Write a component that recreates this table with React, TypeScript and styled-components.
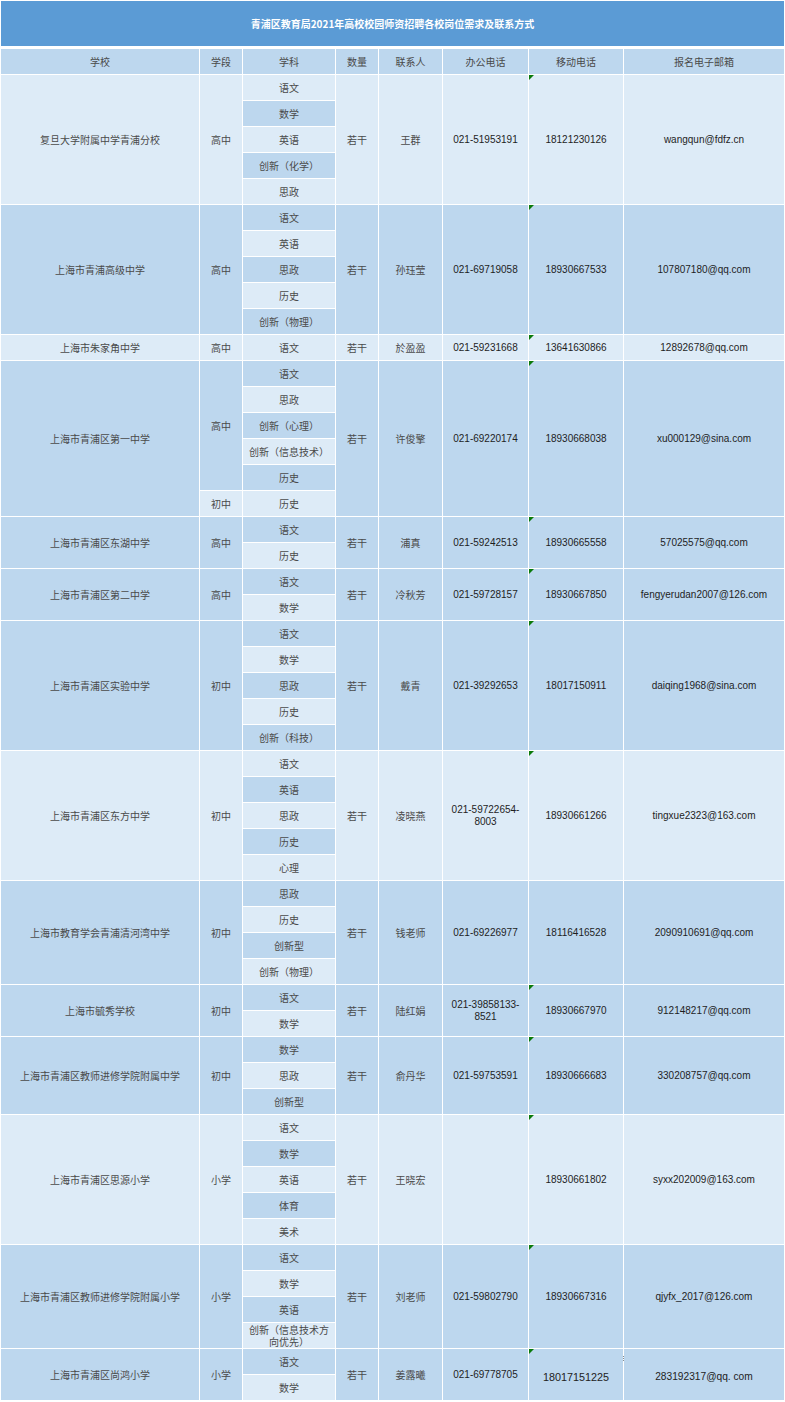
import styled, { createGlobalStyle, css } from "styled-components";

const GlobalStyle = createGlobalStyle`
  body {
    margin: 0;
    background: #ffffff;
    font-family: "Liberation Sans", "Noto Sans CJK SC", sans-serif;
  }
`;

type Tone = "light" | "dark";

interface Group {
  stage: string;
  subjects: string[];
}

interface School {
  name: string;
  groups: Group[];
  qty: string;
  contact: string;
  office: string;
  mobile: string;
  email: string;
  flagged: boolean;
  odd?: boolean;
}

const schools: School[] = [
  { name: "复旦大学附属中学青浦分校", groups: [{ stage: "高中", subjects: ["语文", "数学", "英语", "创新（化学）", "思政"] }], qty: "若干", contact: "王群", office: "021-51953191", mobile: "18121230126", email: "wangqun@fdfz.cn", flagged: true },
  { name: "上海市青浦高级中学", groups: [{ stage: "高中", subjects: ["语文", "英语", "思政", "历史", "创新（物理）"] }], qty: "若干", contact: "孙珏莹", office: "021-69719058", mobile: "18930667533", email: "107807180@qq.com", flagged: true },
  { name: "上海市朱家角中学", groups: [{ stage: "高中", subjects: ["语文"] }], qty: "若干", contact: "於盈盈", office: "021-59231668", mobile: "13641630866", email: "12892678@qq.com", flagged: true },
  { name: "上海市青浦区第一中学", groups: [{ stage: "高中", subjects: ["语文", "思政", "创新（心理）", "创新（信息技术）", "历史"] }, { stage: "初中", subjects: ["历史"] }], qty: "若干", contact: "许俊擎", office: "021-69220174", mobile: "18930668038", email: "xu000129@sina.com", flagged: true },
  { name: "上海市青浦区东湖中学", groups: [{ stage: "高中", subjects: ["语文", "历史"] }], qty: "若干", contact: "浦真", office: "021-59242513", mobile: "18930665558", email: "57025575@qq.com", flagged: true },
  { name: "上海市青浦区第二中学", groups: [{ stage: "高中", subjects: ["语文", "数学"] }], qty: "若干", contact: "冷秋芳", office: "021-59728157", mobile: "18930667850", email: "fengyerudan2007@126.com", flagged: true },
  { name: "上海市青浦区实验中学", groups: [{ stage: "初中", subjects: ["语文", "数学", "思政", "历史", "创新（科技）"] }], qty: "若干", contact: "戴青", office: "021-39292653", mobile: "18017150911", email: "daiqing1968@sina.com", flagged: true },
  { name: "上海市青浦区东方中学", groups: [{ stage: "初中", subjects: ["语文", "英语", "思政", "历史", "心理"] }], qty: "若干", contact: "凌晓燕", office: "021-59722654-8003", mobile: "18930661266", email: "tingxue2323@163.com", flagged: true },
  { name: "上海市教育学会青浦清河湾中学", groups: [{ stage: "初中", subjects: ["思政", "历史", "创新型", "创新（物理）"] }], qty: "若干", contact: "钱老师", office: "021-69226977", mobile: "18116416528", email: "2090910691@qq.com", flagged: false },
  { name: "上海市毓秀学校", groups: [{ stage: "初中", subjects: ["语文", "数学"] }], qty: "若干", contact: "陆红娟", office: "021-39858133-8521", mobile: "18930667970", email: "912148217@qq.com", flagged: true },
  { name: "上海市青浦区教师进修学院附属中学", groups: [{ stage: "初中", subjects: ["数学", "思政", "创新型"] }], qty: "若干", contact: "俞丹华", office: "021-59753591", mobile: "18930666683", email: "330208757@qq.com", flagged: true },
  { name: "上海市青浦区思源小学", groups: [{ stage: "小学", subjects: ["语文", "数学", "英语", "体育", "美术"] }], qty: "若干", contact: "王晓宏", office: "", mobile: "18930661802", email: "syxx202009@163.com", flagged: true },
  { name: "上海市青浦区教师进修学院附属小学", groups: [{ stage: "小学", subjects: ["语文", "数学", "英语", "创新（信息技术方向优先）"] }], qty: "若干", contact: "刘老师", office: "021-59802790", mobile: "18930667316", email: "qjyfx_2017@126.com", flagged: true },
  { name: "上海市青浦区尚鸿小学", groups: [{ stage: "小学", subjects: ["语文", "数学"] }], qty: "若干", contact: "姜露曦", office: "021-69778705", mobile: "18017151225", email: "283192317@qq. com", flagged: true, odd: true },
];

const headers = ["学校", "学段", "学科", "数量", "联系人", "办公电话", "移动电话", "报名电子邮箱"];
const widths = [198, 42, 92, 42, 63, 85, 94, 160];

const Page = styled.div`
  width: 785px;
`;

const Title = styled.div`
  margin: 1px 1px 2px;
  height: 45px;
  background: #5b9bd5;
  color: #ffffff;
  font-family: "Noto Sans CJK SC", sans-serif;
  font-weight: 700;
  font-size: 10px;
  display: flex;
  align-items: center;
  justify-content: center;
`;

const Table = styled.table`
  width: 785px;
  table-layout: fixed;
  border-collapse: separate;
  border-spacing: 1px;
  background: #ffffff;
`;

const Cell = styled.td<{ $tone: Tone; $latin?: boolean; $flag?: boolean; $big?: boolean; $mark?: boolean }>`
  position: relative;
  height: 25px;
  padding: 0 4px;
  box-sizing: border-box;
  text-align: center;
  vertical-align: middle;
  font-size: 10px;
  line-height: 12px;
  background: ${(p) => (p.$tone === "light" ? "#ddebf7" : "#bdd7ee")};
  color: #4a4a4a;
  font-family: "Noto Sans CJK SC", sans-serif;
  word-break: normal;
  overflow-wrap: anywhere;

  ${(p) =>
    p.$latin &&
    css`
      font-family: "Liberation Sans", Arial, sans-serif;
      color: #1e1e1e;
    `}

  ${(p) =>
    p.$big &&
    css`
      font-size: 10.8px;
      padding-top: 4px;
      color: #222222;
    `}

  ${(p) =>
    p.$flag &&
    css`
      &::before {
        content: "";
        position: absolute;
        top: 0;
        left: 0;
        border-top: 5px solid #0a7a0a;
        border-right: 5px solid transparent;
      }
    `}

  ${(p) =>
    p.$mark &&
    css`
      font-size: 10.2px;
      &::after {
        content: "";
        position: absolute;
        left: -1px;
        top: 7px;
        width: 1px;
        height: 6px;
        background: repeating-linear-gradient(#8a8a8a 0 1px, transparent 1px 2px);
      }
    `}
`;

const HeadCell = styled.th`
  height: 25px;
  padding: 0;
  font-weight: 400;
  font-size: 10px;
  color: #4a4a4a;
  background: #bdd7ee;
  font-family: "Noto Sans CJK SC", sans-serif;
  text-align: center;
  vertical-align: middle;
`;

const toneOf = (row: number): Tone => (row % 2 === 1 ? "light" : "dark");

function buildRows() {
  const rows: JSX.Element[] = [];
  let row = 1;
  schools.forEach((s, si) => {
    const total = s.groups.reduce((n, g) => n + g.subjects.length, 0);
    const first = toneOf(row);
    s.groups.forEach((g, gi) => {
      g.subjects.forEach((subject, ji) => {
        const isFirst = gi === 0 && ji === 0;
        rows.push(
          <tr key={`${si}-${gi}-${ji}`}>
            {isFirst && (
              <Cell $tone={first} rowSpan={total}>
                {s.name}
              </Cell>
            )}
            {ji === 0 && (
              <Cell $tone={toneOf(row)} rowSpan={g.subjects.length}>
                {g.stage}
              </Cell>
            )}
            <Cell $tone={toneOf(row)}>{subject}</Cell>
            {isFirst && (
              <>
                <Cell $tone={first} rowSpan={total}>
                  {s.qty}
                </Cell>
                <Cell $tone={first} rowSpan={total}>
                  {s.contact}
                </Cell>
                <Cell $tone={first} $latin rowSpan={total}>
                  {s.office}
                </Cell>
                <Cell $tone={first} $latin $flag={s.flagged} $big={s.odd} rowSpan={total}>
                  {s.mobile}
                </Cell>
                <Cell $tone={first} $latin $big={s.odd} $mark={s.odd} rowSpan={total}>
                  {s.email}
                </Cell>
              </>
            )}
          </tr>
        );
        row++;
      });
    });
  });
  return rows;
}

export default function App() {
  return (
    <Page>
      <GlobalStyle />
      <Title>青浦区教育局2021年高校校园师资招聘各校岗位需求及联系方式</Title>
      <Table>
        <colgroup>
          {widths.map((w, i) => (
            <col key={i} style={{ width: w }} />
          ))}
        </colgroup>
        <thead>
          <tr>
            {headers.map((h) => (
              <HeadCell key={h}>{h}</HeadCell>
            ))}
          </tr>
        </thead>
        <tbody>{buildRows()}</tbody>
      </Table>
    </Page>
  );
}
